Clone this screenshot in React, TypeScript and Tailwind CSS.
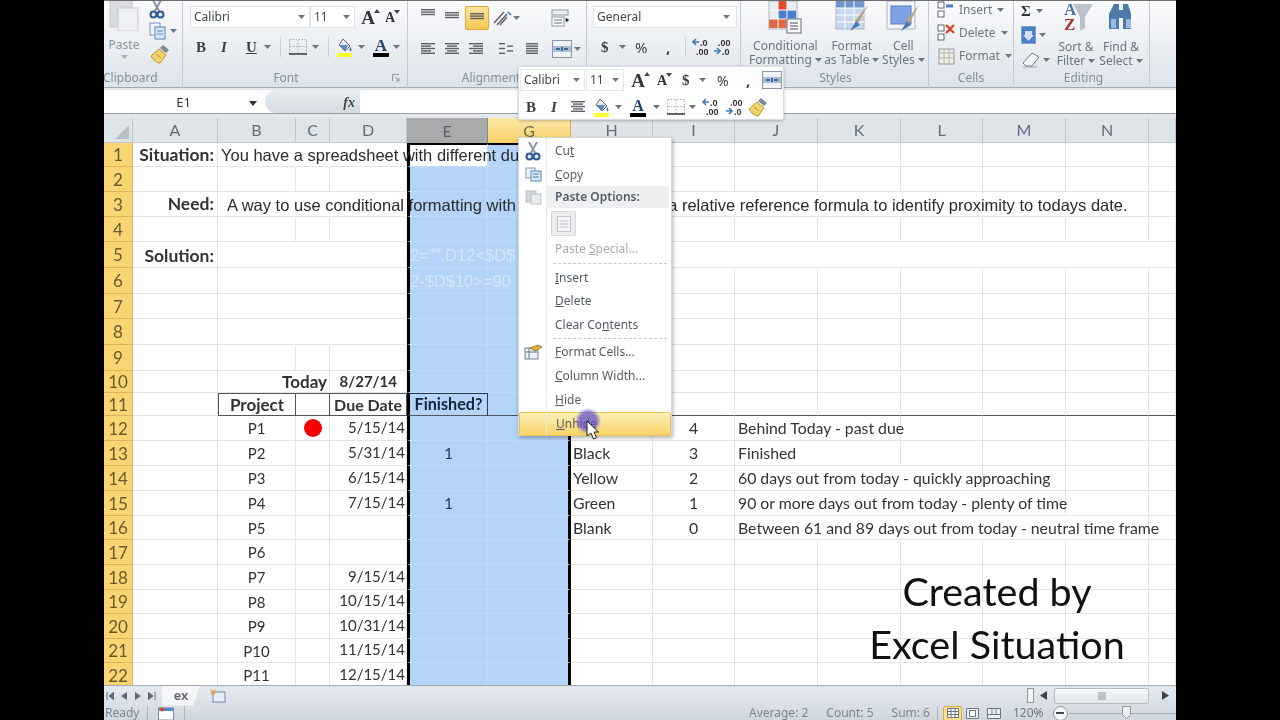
import { ReactNode } from "react";

const COLS = ["A", "B", "C", "D", "E", "G", "H", "I", "J", "K", "L", "M", "N", "O"];
const ROWS = Array.from({ length: 22 }, (_, i) => i + 1);

// cells where the text runs on into the next one, so no gridline on the right
const NO_RIGHT = new Set([
  "B1", "C1", "B3", "C3", "D3", "H3", "I3", "J3", "K3", "L3", "M3",
  "B5", "C5", "H5", "I5", "J5", "K5", "L5", "M5", "N5",
  "B6", "C6", "B7", "C7", "B8", "C8", "B10",
  "J12", "J13", "J14", "J15", "J16", "K14", "K15", "K16", "L15", "L16", "M16",
]);

const calibri = "font-['Lato',sans-serif]";
const arial = "font-['Liberation_Sans',sans-serif] text-[16.5px] text-[#2b2b2b] pt-[2px]";
const faint = "z-10 font-['Liberation_Sans',sans-serif] text-[16.5px] text-[#d5e6fb] pt-[2px]";

const CELLS: Record<string, { text: string; className: string }> = {
  A1: { text: "Situation:", className: "justify-end pr-[3px] pt-[1px] font-bold text-[17.5px]" },
  A3: { text: "Need:", className: "justify-end pr-[3px] font-bold text-[17.5px]" },
  A5: { text: "Solution:", className: "justify-end pr-[3px] pt-[3px] font-bold text-[17.5px]" },
  B1: { text: "You have a spreadsheet with different due dates", className: `z-10 pl-[3px] ${arial}` },
  B3: { text: "A way to use conditional formatting with color sets based on a relative reference formula to identify proximity to todays date.", className: `z-10 pl-[9px] ${arial}` },
  E5: { text: '2="",D12<$D$', className: faint },
  E6: { text: "2-$D$10>=90", className: faint },
  C10: { text: "Today", className: "z-10 justify-end pr-[2px] font-bold text-[17px]" },
  D10: { text: "8/27/14", className: "justify-end pr-[9px] font-bold text-[15px]" },
  B11: { text: "Project", className: "justify-center font-bold text-[17px]" },
  D11: { text: "Due Date", className: "justify-end pr-[4px] font-bold text-[16px]" },
  E11: { text: "Finished?", className: "justify-center font-bold text-[16.2px] text-[#14243a]" },
  E13: { text: "1", className: "justify-center text-[15px] text-[#24384f]" },
  E15: { text: "1", className: "justify-center text-[15px] text-[#24384f]" },
  H13: { text: "Black", className: "pl-[2px] text-[15.8px]" },
  H14: { text: "Yellow", className: "pl-[2px] text-[15.8px]" },
  H15: { text: "Green", className: "pl-[2px] text-[15.8px]" },
  H16: { text: "Blank", className: "pl-[2px] text-[15.8px]" },
  I12: { text: "4", className: "justify-center text-[15.8px]" },
  I13: { text: "3", className: "justify-center text-[15.8px]" },
  I14: { text: "2", className: "justify-center text-[15.8px]" },
  I15: { text: "1", className: "justify-center text-[15.8px]" },
  I16: { text: "0", className: "justify-center text-[15.8px]" },
  J12: { text: "Behind Today - past due", className: "z-10 pl-[3px] text-[15.8px]" },
  J13: { text: "Finished", className: "z-10 pl-[3px] text-[15.8px]" },
  J14: { text: "60 days out from today - quickly approaching", className: "z-10 pl-[3px] text-[15.8px]" },
  J15: { text: "90 or more days out from today - plenty of time", className: "z-10 pl-[3px] text-[15.8px]" },
  J16: { text: "Between 61 and 89 days out from today - neutral time frame", className: "z-10 pl-[3px] text-[15.8px]" },
};

const PROJECTS = ["P1", "P2", "P3", "P4", "P5", "P6", "P7", "P8", "P9", "P10", "P11"];
const DATES = ["5/15/14", "5/31/14", "6/15/14", "7/15/14", "", "", "9/15/14", "10/15/14", "10/31/14", "11/15/14", "12/15/14"];

function Arrow({ className = "" }: { className?: string }) {
  return (
    <svg width="7" height="4" viewBox="0 0 7 4" className={`shrink-0 ${className}`}>
      <path d="M0 0h7L3.5 4z" fill="#6b7683" />
    </svg>
  );
}

function CutIcon() {
  return (
    <svg width="16" height="19" viewBox="0 0 16 19">
      <path d="M4 0l6 11M12 0L6 11" stroke="#8c96a3" strokeWidth="2" />
      <circle cx="4.500" cy="14.500" r="3" fill="#dce6f3" stroke="#33588f" strokeWidth="2" />
      <circle cx="11.500" cy="14.500" r="3" fill="#dce6f3" stroke="#33588f" strokeWidth="2" />
    </svg>
  );
}

function Lines({ rows }: { rows: [number, number][] }) {
  return (
    <svg width="16" height="12" viewBox="0 0 16 12">
      {rows.map(([x, w], i) => (
        <rect key={i} x={x} y={i * 2.4} width={w} height="1.4" fill="#5c6066" />
      ))}
    </svg>
  );
}

function FillIcon() {
  return (
    <svg width="18" height="19" viewBox="0 0 18 19">
      <path d="M7 1l7 7-5 5-6-6z" fill="#e8edf3" stroke="#667" />
      <path d="M3 7h9l-3 6z" fill="#5a8ac6" />
      <path d="M14 9c1.5 2 2 3 1 4s-2-1-1-4z" fill="#3c6ea8" />
      <rect x="1" y="15" width="15" height="4" fill="#ffff30" />
    </svg>
  );
}

function ColorA({ small = false }: { small?: boolean }) {
  return (
    <div className="flex flex-col items-center">
      <span className={`font-['Liberation_Serif',serif] font-bold leading-[15px] text-[#1f3f78] ${small ? "text-[16px]" : "text-[17px]"}`}>A</span>
      <span className="h-[4px] w-[16px] bg-black" />
    </div>
  );
}

function BigA({ up }: { up: boolean }) {
  return (
    <span className="relative font-['Liberation_Serif',serif] font-bold leading-none text-[#333]">
      <span className={up ? "text-[19px]" : "text-[14px]"}>A</span>
      <svg width="6" height="4" viewBox="0 0 6 4" className="absolute -right-[5px] top-[1px]">
        <path d={up ? "M0 4h6L3 0z" : "M0 0h6L3 4z"} fill="#445" />
      </svg>
    </span>
  );
}

function DecIcon({ more }: { more: boolean }) {
  return (
    <svg width="22" height="18" viewBox="0 0 22 18" fontFamily="Liberation Sans, sans-serif" fontSize="9" fontWeight="700" fill="#333">
      {more ? (
        <>
          <text x="5" y="8">.00</text>
          <text x="9" y="17">.0</text>
          <path d="M1 13h5M4 10l3 3-3 3" stroke="#3f78bd" strokeWidth="1.6" fill="none" />
        </>
      ) : (
        <>
          <text x="9" y="8">.0</text>
          <text x="5" y="17">.00</text>
          <path d="M8 4H2M5 1L2 4l3 3" stroke="#3f78bd" strokeWidth="1.6" fill="none" />
        </>
      )}
    </svg>
  );
}

function Painter() {
  return (
    <svg width="22" height="22" viewBox="0 0 22 22">
      <path d="M14 2l6 5-3 3-6-5z" fill="#7c8a98" />
      <path d="M10 6l7 6-6 8c-3 0-7-3-9-7z" fill="#efd56a" stroke="#b3952e" />
      <path d="M7 11l5 4" stroke="#b3952e" />
    </svg>
  );
}

function MergeIcon() {
  return (
    <svg width="20" height="18" viewBox="0 0 20 18">
      <rect x=".5" y=".5" width="19" height="17" fill="#eef2f6" stroke="#8a97a5" />
      <rect x="1" y="6" width="18" height="6" fill="#a9bfd8" />
      <path d="M4 9h4M16 9h-4M10 7v4" stroke="#27486e" strokeWidth="1.4" />
    </svg>
  );
}

function BorderIcon() {
  return (
    <svg width="18" height="16" viewBox="0 0 18 16">
      <rect x=".5" y=".5" width="17" height="14" fill="none" stroke="#a8adb3" strokeDasharray="1.5 1.5" />
      <path d="M9 1v13M1 7.5h16" stroke="#a8adb3" strokeDasharray="1.5 1.5" />
      <path d="M0 15h18" stroke="#444" strokeWidth="1.6" />
    </svg>
  );
}

function RibbonGroup({ className, label, labelClass = "", launcher = false, children }: { className: string; label: string; labelClass?: string; launcher?: boolean; children: ReactNode }) {
  return (
    <div className={`relative flex h-[87px] shrink-0 flex-col overflow-hidden border-r border-[#c5cbd2] ${className}`}>
      <div className="h-[68px]">{children}</div>
      <div className={`flex h-[17px] items-center justify-center text-[12px] text-[#84909c] ${labelClass}`}>{label}</div>
      {launcher && (
        <svg width="8" height="8" viewBox="0 0 8 8" className="absolute bottom-[6px] right-[7px]">
          <path d="M.5 7V.5H7M3 3l4 4M7 4v3H4" stroke="#8b96a3" fill="none" />
        </svg>
      )}
    </div>
  );
}

function Combo({ className, text }: { className: string; text: string }) {
  return (
    <div className={`flex h-[22px] items-center justify-between border border-[#dfe3e8] bg-white px-[3px] text-[12px] text-[#3e4650] ${className}`}>
      <span>{text}</span>
      <Arrow className="mr-[1px]" />
    </div>
  );
}

function Ribbon() {
  return (
    <div className="flex h-[88px] border-t border-b border-t-[#6d6d6d] border-b-[#a5abb2] bg-linear-to-b from-[#fafbfc] to-[#dde3ea] font-['Noto_Sans',sans-serif]">
      <RibbonGroup className="w-[79px]" label="Clipboard" labelClass="justify-start -ml-[1px]">
        <div className="flex">
          <div className="flex w-[40px] flex-col items-center">
            <svg width="30" height="32" viewBox="0 0 30 32" className="-mt-[2px]">
              <rect x="1" y="0" width="22" height="28" rx="1" fill="#d9dcdf" stroke="#c2c5c9" />
              <rect x="9" y="9" width="20" height="23" fill="#eff0f2" stroke="#c9cbcf" />
            </svg>
            <span className="mt-[7px] text-[12px] leading-[14px] text-[#8c96a1]">Paste</span>
            <Arrow className="mt-[3px] opacity-50" />
          </div>
          <div className="flex flex-col items-start gap-[3px] pl-[5px]">
            <div className="-mt-[1px] h-[19px]"><CutIcon /></div>
            <div className="flex items-center gap-[3px]">
              <svg width="18" height="18" viewBox="0 0 18 18">
                <rect x="1" y="1" width="10" height="12" fill="#eef3f8" stroke="#7f98b5" />
                <rect x="6" y="5" width="10" height="12" fill="#d8e6f5" stroke="#5b86b8" />
                <path d="M8 9h6M8 12h6" stroke="#5b86b8" />
              </svg>
              <Arrow />
            </div>
            <Painter />
          </div>
        </div>
      </RibbonGroup>

      <RibbonGroup className="w-[225px]" label="Font" labelClass="pr-[18px]" launcher>
        <div className="pl-[7px] pt-[5px]">
          <div className="flex h-[22px] items-center">
            <Combo className="w-[120px]" text="Calibri" />
            <Combo className="w-[45px]" text="11" />
            <div className="ml-[2px] flex w-[22px] justify-center"><BigA up /></div>
            <div className="flex w-[22px] justify-center"><BigA up={false} /></div>
          </div>
          <div className="mt-[8px] flex h-[22px] items-center font-['Liberation_Serif',serif] text-[15px] text-[#3b3f45]">
            <span className="ml-[6px] w-[25px] font-bold">B</span>
            <span className="w-[25px] font-bold italic">I</span>
            <span className="w-[18px] font-bold underline">U</span>
            <Arrow />
            <span className="ml-[9px] h-[20px] w-px bg-[#ccd1d7]" />
            <span className="ml-[8px]"><BorderIcon /></span>
            <Arrow className="ml-[5px]" />
            <span className="ml-[9px] h-[20px] w-px bg-[#ccd1d7]" />
            <span className="ml-[7px]"><FillIcon /></span>
            <Arrow className="ml-[4px]" />
            <span className="ml-[8px]"><ColorA /></span>
            <Arrow className="ml-[4px]" />
          </div>
        </div>
      </RibbonGroup>

      <RibbonGroup className="w-[179px]" label="Alignment" labelClass="pr-[12px]">
        <div className="pl-[12px] pt-[4px]">
          <div className="flex h-[25px] items-center">
            <div className="flex w-[24px] -translate-y-[3px]"><Lines rows={[[1, 14], [1, 14], [1, 14]]} /></div>
            <div className="flex w-[21px]"><Lines rows={[[1, 14], [1, 14], [1, 14]]} /></div>
            <div className="flex h-[24px] w-[24px] items-center justify-center rounded-[2px] border border-[#dca93b] bg-linear-to-b from-[#fbe29a] to-[#f8c850] pt-[2px]"><Lines rows={[[1, 14], [1, 14], [1, 14]]} /></div>
            <svg width="22" height="18" viewBox="0 0 22 18" className="ml-[2px]">
              <path d="M3 14L13 3M6 16L16 5M9 16l7-8" stroke="#5c6066" strokeWidth="1.4" />
              <path d="M17 3l3 3" stroke="#3f78bd" strokeWidth="1.6" />
            </svg>
            <Arrow />
            <svg width="20" height="18" viewBox="0 0 20 18" className="ml-[31px]">
              <rect x="1" y="1" width="16" height="5" fill="#eee" stroke="#8a97a5" />
              <rect x="1" y="8" width="12" height="9" fill="#fff" stroke="#8a97a5" />
              <path d="M3 11h8M3 14h8M15 9v4l3-2" stroke="#667" />
            </svg>
          </div>
          <div className="mt-[8px] flex h-[22px] items-center">
            <div className="flex w-[24px]"><Lines rows={[[1, 14], [1, 10], [1, 14], [1, 10], [1, 14]]} /></div>
            <div className="flex w-[24px]"><Lines rows={[[1, 14], [3, 10], [1, 14], [3, 10], [1, 14]]} /></div>
            <div className="flex w-[24px]"><Lines rows={[[1, 14], [5, 10], [1, 14], [5, 10], [1, 14]]} /></div>
            <div className="ml-[6px] flex w-[25px]"><Lines rows={[[1, 6], [9, 6], [1, 6], [9, 6], [1, 6]]} /></div>
            <div className="flex w-[24px]"><Lines rows={[[3, 12], [3, 12], [3, 12], [3, 12], [3, 12]]} /></div>
            <div className="ml-[5px] flex items-center gap-[2px]"><MergeIcon /><Arrow /></div>
          </div>
        </div>
      </RibbonGroup>

      <RibbonGroup className="w-[154px]" label="">
        <div className="pl-[6px] pt-[5px]">
          <Combo className="w-[144px] pr-[5px]" text="General" />
          <div className="mt-[8px] flex h-[22px] items-center text-[15px] text-[#3d4147]">
            <span className="ml-[8px] w-[18px] font-['Liberation_Serif',serif] font-bold">$</span>
            <Arrow />
            <span className="ml-[9px] w-[31px]">%</span>
            <span className="w-[19px] font-bold">,</span>
            <span className="h-[20px] w-px bg-[#ccd1d7]" />
            <span className="ml-[5px]"><DecIcon more={false} /></span>
            <span><DecIcon more /></span>
          </div>
        </div>
      </RibbonGroup>

      <RibbonGroup className="w-[188px]" label="Styles" labelClass="pl-[2px]">
        <div className="flex pl-[5px] text-[12px] leading-[14px] text-[#6b7683]">
          <div className="flex w-[80px] flex-col items-center">
            <svg width="34" height="33" viewBox="0 0 34 33" className="mb-[5px]">
              <rect x="1" y="0" width="28" height="28" fill="#e9eef4" stroke="#a9b5c2" />
              <rect x="10" y="0" width="9" height="9" fill="#e0492e" />
              <rect x="10" y="9" width="18" height="9" fill="#4f7fcc" />
              <rect x="1" y="18" width="18" height="9" fill="#e0673f" />
              <path d="M10 0v28M19 0v28M1 9h28M1 18h28" stroke="#fff" />
              <rect x="19" y="18" width="14" height="14" fill="#fff" stroke="#667" />
              <path d="M22 22h8M22 25h8M22 28h8" stroke="#445" />
            </svg>
            <span>Conditional</span>
            <span className="flex items-center gap-[3px]">Formatting <Arrow /></span>
          </div>
          <div className="flex w-[54px] flex-col items-center">
            <svg width="36" height="33" viewBox="0 0 36 33" className="mb-[5px]">
              <rect x="2" y="0" width="28" height="28" fill="#c5d6ed" stroke="#a9b5c2" />
              <rect x="2" y="0" width="28" height="7" fill="#6f95cb" />
              <path d="M11 0v28M20 0v28M2 7h28M2 14h28M2 21h28" stroke="#fff" />
              <path d="M34 4L21 20l3 3z" fill="#b9a27e" />
              <path d="M22 20l-6 10 10-6z" fill="#4f76b0" />
            </svg>
            <span>Format</span>
            <span className="flex items-center gap-[3px] whitespace-nowrap">as Table <Arrow /></span>
          </div>
          <div className="flex w-[50px] flex-col items-center">
            <svg width="36" height="33" viewBox="0 0 36 33" className="mb-[5px]">
              <rect x="2" y="0" width="28" height="28" fill="#f2f5f9" stroke="#a9b5c2" />
              <rect x="6" y="5" width="20" height="18" fill="#7ea3e2" stroke="#5a7fc0" />
              <path d="M34 4L21 20l3 3z" fill="#b9a27e" />
              <path d="M22 20l-6 10 10-6z" fill="#4f76b0" />
            </svg>
            <span>Cell</span>
            <span className="flex items-center gap-[3px] whitespace-nowrap">Styles <Arrow /></span>
          </div>
        </div>
      </RibbonGroup>

      <RibbonGroup className="w-[85px]" label="Cells">
        <div className="-mt-[2px] flex flex-col gap-[2px] pl-[8px] text-[12px] text-[#6b7683]">
          {["Insert", "Delete", "Format"].map((label, i) => (
            <div key={label} className="flex h-[21px] items-center">
              <svg width="20" height="20" viewBox="0 0 20 20" className="mr-[2px]">
                {i === 2 ? (
                  <>
                    <rect x="2" y="3" width="15" height="15" fill="#f4eed9" stroke="#8a97a5" />
                    <path d="M2 7h15M7 3v15M12 3v15M2 12h15" stroke="#a9b5c2" />
                  </>
                ) : (
                  <>
                    <rect x="1" y="2" width="6" height="6" fill="#fff" stroke="#667" />
                    <rect x="1" y="11" width="6" height="6" fill="#fff" stroke="#667" />
                    {i === 0 ? <path d="M9 6h7" stroke="#4f7fcc" strokeWidth="3" /> : <path d="M9 2l8 8M17 2l-8 8" stroke="#d3452d" strokeWidth="2.4" />}
                  </>
                )}
              </svg>
              <span>{label}</span>
              <Arrow className="ml-[5px]" />
            </div>
          ))}
        </div>
      </RibbonGroup>

      <RibbonGroup className="w-[136px]" label="Editing" labelClass="pl-[4px]">
        <div className="flex pl-[7px] text-[12px] leading-[14px] text-[#6b7683]">
          <div className="-mt-[1px] flex w-[32px] flex-col">
            <div className="flex h-[22px] items-center gap-[5px] font-['Liberation_Serif',serif] text-[15px] font-bold text-[#333]">Σ<Arrow /></div>
            <div className="mt-[2px] flex h-[22px] items-center gap-[3px]">
              <svg width="15" height="18" viewBox="0 0 15 18">
                <rect x=".5" y=".5" width="14" height="17" fill="#4a7fcb" stroke="#8a9fbd" />
                <path d="M4 5h7v4h2l-5.500 6L2 9h2z" fill="#cfe0f6" />
              </svg>
              <Arrow />
            </div>
            <div className="mt-[3px] flex h-[22px] items-center gap-[2px]">
              <svg width="20" height="16" viewBox="0 0 20 16">
                <path d="M11 1l7 4-7 9H5L2 11z" fill="#f3f4f6" stroke="#727c88" />
                <path d="M2 15h14" stroke="#a0a8b2" />
              </svg>
              <Arrow />
            </div>
          </div>
          <div className="flex w-[46px] flex-col items-center">
            <div className="relative mb-[4px] h-[35px] w-[34px] translate-x-[2px]">
              <svg width="34" height="32" viewBox="0 0 34 32" className="absolute left-0 top-0">
                <path d="M12 3h20l-8 13v11l-5 3V16z" fill="#bcc2c9" />
              </svg>
              <span className="absolute left-[3px] top-0 font-['Liberation_Serif',serif] text-[17px] font-bold leading-[17px] text-[#4a6fa8]">A</span>
              <span className="absolute left-[3px] top-[15px] font-['Liberation_Serif',serif] text-[17px] font-bold leading-[17px] text-[#a33a2b]">Z</span>
            </div>
            <span className="whitespace-nowrap">Sort &amp;</span>
            <span className="flex items-center gap-[3px]">Filter <Arrow /></span>
          </div>
          <div className="flex w-[44px] flex-col items-center">
            <svg width="30" height="31" viewBox="0 0 30 31" className="mb-[8px]">
              <path d="M8 3h5v6h4V3h5l3 10v15H17V17h-4v11H3V13z" fill="#4d79ad" />
              <rect x="5" y="18" width="5" height="9" fill="#9dbbe0" />
              <rect x="20" y="18" width="5" height="9" fill="#9dbbe0" />
            </svg>
            <span className="whitespace-nowrap">Find &amp;</span>
            <span className="flex items-center gap-[3px]">Select <Arrow /></span>
          </div>
        </div>
      </RibbonGroup>
    </div>
  );
}

function FormulaBar() {
  return (
    <div className="mt-[2px] flex h-[24px] border-b border-[#9aa1a9] bg-white font-['Noto_Sans',sans-serif]">
      <div className="relative flex w-[161px] items-center justify-center pt-[2px] text-[13px] text-[#30363d]">
        <span className="pr-[2px]">E1</span>
        <svg width="8" height="5" viewBox="0 0 8 5" className="absolute right-[8px] top-[11px]">
          <path d="M0 0h8L4 5z" fill="#333" />
        </svg>
      </div>
      <div className="flex w-[95px] items-center justify-end rounded-l-[12px] bg-linear-to-b from-[#e8ecf0] to-[#d5dbe2] pr-[5px] pt-[2px]">
        <span className="font-['Liberation_Serif',serif] text-[14px] font-bold italic text-[#444]">fx</span>
      </div>
    </div>
  );
}

function Cell({ col, row }: { col: string; row: number }) {
  const id = `${col}${row}`;
  const selected = col === "E" || col === "G";
  const cell = CELLS[id];
  let text = cell?.text;
  let extra = cell?.className ?? "";
  if (row >= 12 && col === "B") {
    text = PROJECTS[row - 12];
    extra = "justify-center text-[15px] text-[#333] pt-[1px]";
  }
  if (row >= 12 && col === "D") {
    text = DATES[row - 12];
    extra = "justify-end pr-[1px] pb-[2px] text-[15px] text-[#333]";
  }

  const bg = id === "E1" ? "bg-white" : selected ? "bg-[#b5d4fa]" : "bg-white";
  const lineColor = selected ? "border-[#c0dafb]" : "border-[#e3e5e8]";
  const hideRight = NO_RIGHT.has(id) ? "border-r-transparent" : "";
  const frame: string[] = [];
  if (col === "E") frame.push("border-l-[3px] border-l-black");
  if (col === "G") frame.push("border-r-[3px] border-r-black");
  if (selected && row === 1) frame.push("border-t-2 border-t-black");
  if (col === "E" && row === 11) frame.push("border-t border-t-[#24384f]");
  if (row === 11 && col !== "A") frame.push("border-b-[#50565c]");
  if (row === 11 && (col === "B" || col === "C" || col === "D")) frame.push("border-t border-t-[#50565c] border-r-[#50565c]");
  if (row === 11 && col === "B") frame.push("border-l border-l-[#50565c]");
  if (row === 11 && col === "E") frame.push("border-r-[#24384f]");

  return (
    <div className={`flex min-w-0 items-center whitespace-nowrap border-r border-b ${lineColor} ${bg} ${hideRight} ${frame.join(" ")} ${extra}`}>
      {text}
      {id === "C12" && <span className="mx-auto h-[18px] w-[18px] rounded-full bg-[#f80000]" />}
    </div>
  );
}

function Sheet() {
  return (
    <div className={`relative mt-[4px] grid h-[567px] grid-cols-[29px_85px_78px_34px_77px_81px_83px_82px_82px_83px_83px_82px_83px_83px_27px] grid-rows-[25px_24px_25px_25px_25px_26px_26px_25px_26px_26px_22px_23px_25px_25px_25px_25px_24px_25px_25px_24px_25px_24px_25px] overflow-hidden bg-white text-[#333] ${calibri}`}>
      <div className="flex items-end justify-end border-r border-b border-[#c2c8cf] bg-[#dfe4e9] p-[3px]">
        <svg width="14" height="14" viewBox="0 0 14 14"><path d="M14 0v14H0z" fill="#b9c0c8" /></svg>
      </div>
      {COLS.map((col) =>
        col === "E" ? (
          <div key={col} className="flex items-center justify-center border-r border-[#85878a] bg-[#a9aaab] text-[16px] text-[#5c6066]">E</div>
        ) : col === "G" ? (
          <div key={col} className="flex items-center justify-center border-r border-[#e0b84f] bg-linear-to-b from-[#fbe9a8] to-[#f8cf63] text-[16px] text-[#6f6a50]">G</div>
        ) : (
          <div key={col} className="flex items-center justify-center border-r border-b border-[#c2c8cf] bg-[#dfe4e9] text-[16px] text-[#5f6d7c]">{col === "O" ? "" : col}</div>
        ),
      )}
      {ROWS.map((row) => (
        <div key={row} className="contents">
          <div className="flex items-center justify-center border-r border-b border-[#e0b557] bg-[#f9d574] text-[17px] leading-none text-[#6a5a2c]">{row}</div>
          {COLS.map((col) => (
            <Cell key={col} col={col} row={row} />
          ))}
        </div>
      ))}
      <div className="absolute left-[650px] top-[446px] z-10 flex w-[486px] flex-col items-center text-[39.5px] leading-[53px] text-[#111]">
        <span>Created by</span>
        <span>Excel Situation</span>
      </div>
    </div>
  );
}

function TabBar() {
  return (
    <div className="flex h-[20px] items-center border-t border-[#a4abb3] bg-linear-to-b from-[#e4e9ee] to-[#d9dfe6]">
      <div className="flex w-[58px] items-center justify-between pl-[2px] pr-[6px] text-[#5c6b7a]">
        <svg width="8" height="8" viewBox="0 0 8 8"><path d="M1 0v8M8 0v8L3 4z" stroke="#5c6b7a" fill="#5c6b7a" /></svg>
        <svg width="6" height="8" viewBox="0 0 6 8"><path d="M6 0v8L0 4z" fill="#5c6b7a" /></svg>
        <svg width="6" height="8" viewBox="0 0 6 8"><path d="M0 0v8l6-4z" fill="#5c6b7a" /></svg>
        <svg width="8" height="8" viewBox="0 0 8 8"><path d="M7 0v8M0 0v8l5-4z" stroke="#5c6b7a" fill="#5c6b7a" /></svg>
      </div>
      <div className="flex h-[20px] w-[38px] items-center justify-center bg-[#f4f6f8] font-['Noto_Sans',sans-serif] text-[13px] font-semibold text-[#5c6167] [clip-path:polygon(0_0,100%_0,82%_100%,0_100%)]">ex</div>
      <div className="ml-[2px] flex h-[20px] w-[31px] items-center justify-center">
        <svg width="16" height="14" viewBox="0 0 16 14">
          <rect x="3" y="3" width="12" height="10" fill="#e7eef6" stroke="#6d88a8" />
          <path d="M1 1l4 4M5 1L1 5" stroke="#e3a12c" strokeWidth="1.4" />
        </svg>
      </div>
      <div className="ml-auto flex h-[20px] items-center">
        <div className="h-[15px] w-[7px] border border-[#8d959e] bg-[#f3f5f7]" />
        <svg width="7" height="9" viewBox="0 0 7 9" className="ml-[6px]"><path d="M7 0v9L0 4.500z" fill="#3e4650" /></svg>
        <div className="ml-[7px] flex h-[16px] w-[95px] items-center justify-center rounded-[2px] border border-[#b6bcc4] bg-linear-to-b from-[#f5f6f8] to-[#e3e6ea]">
          <svg width="8" height="8" viewBox="0 0 8 8"><path d="M1 0v8M3 0v8M5 0v8M7 0v8" stroke="#8d959e" /></svg>
        </div>
        <svg width="7" height="9" viewBox="0 0 7 9" className="ml-[13px] mr-[7px]"><path d="M0 0v9l7-4.500z" fill="#3e4650" /></svg>
      </div>
    </div>
  );
}

function StatusBar() {
  return (
    <div className="flex h-[15px] items-center overflow-hidden bg-linear-to-b from-[#dbe0e6] to-[#cfd6dd] pl-[1px] pt-[1px] font-['Noto_Sans',sans-serif] text-[12px] text-[#7a8794]">
      <span className="w-[42px]">Ready</span>
      <span className="h-[15px] w-px bg-[#aeb5bd]" />
      <svg width="16" height="13" viewBox="0 0 16 13" className="ml-[10px]">
        <rect x=".5" y="1" width="15" height="12" fill="#fff" stroke="#7a8fa8" />
        <rect x="1" y="1" width="14" height="3" fill="#5b8ac4" />
        <circle cx="4" cy="2.500" r="2" fill="#d8452d" />
      </svg>
      <span className="ml-[10px] h-[15px] w-px bg-[#aeb5bd]" />
      <span className="ml-[564px]">Average: 2</span>
      <span className="ml-[18px]">Count: 5</span>
      <span className="ml-[18px]">Sum: 6</span>
      <span className="ml-[7px] h-[15px] w-px bg-[#aeb5bd]" />
      <span className="ml-[5px] flex h-[15px] w-[19px] items-center justify-center rounded-[2px] border border-[#dca93b] bg-[#fbdf8c]">
        <svg width="12" height="10" viewBox="0 0 12 10"><path d="M.5.5h11v9H.5zM4 .5v9M8 .5v9M.5 3.500h11M.5 6.500h11" stroke="#6a7484" fill="#fff" /></svg>
      </span>
      <svg width="13" height="11" viewBox="0 0 13 11" className="ml-[4px]"><path d="M.5.5h12v10H.5z" stroke="#6a7484" fill="#eef1f4" /><path d="M3.500 2.500h6v6h-6z" stroke="#6a7484" fill="#fff" /></svg>
      <svg width="14" height="11" viewBox="0 0 14 11" className="ml-[8px]"><path d="M.5.5h13v10H.5zM5 .5v6M9 .5v6M.5 6.500h13" stroke="#6a7484" fill="#eef1f4" /></svg>
      <span className="ml-[12px] text-[#6d7986]">120%</span>
      <span className="ml-[9px] flex h-[15px] w-[15px] items-center justify-center rounded-full border border-[#8d959e] bg-[#f3f5f7]">
        <span className="h-[2px] w-[8px] bg-[#3e4650]" />
      </span>
      <div className="relative ml-[1px] h-px flex-1 bg-[#a8afb7]">
        <svg width="9" height="13" viewBox="0 0 9 13" className="absolute left-[53px] -top-[7px]"><path d="M.5.5h8v8L4.500 12.500.5 8.500z" fill="#eef1f4" stroke="#8d959e" /></svg>
      </div>
    </div>
  );
}

function MiniToolbar() {
  return (
    <div className="absolute left-[518px] top-[66px] z-20 h-[54px] w-[266px] rounded-[2px] border border-[#d8dce1] bg-white/95 font-['Noto_Sans',sans-serif] shadow-[0_1px_3px_rgba(0,0,0,0.25)]">
      <div className="flex h-[26px] items-center pl-[1px]">
        <Combo className="w-[65px] border-[#e6e9ec]" text="Calibri" />
        <Combo className="ml-px w-[38px] border-[#e6e9ec]" text="11" />
        <div className="ml-[3px] flex w-[22px] justify-center"><BigA up /></div>
        <div className="ml-[2px] flex w-[22px] justify-center"><BigA up={false} /></div>
        <span className="ml-[9px] w-[17px] font-['Liberation_Serif',serif] text-[15px] font-bold text-[#3b3f45]">$</span>
        <Arrow />
        <span className="ml-[11px] w-[29px] text-[14px] text-[#3d4147]">%</span>
        <span className="w-[14px] text-[15px] font-bold text-[#3d4147]">,</span>
        <span className="ml-[2px]"><MergeIcon /></span>
      </div>
      <div className="mt-[1px] flex h-[26px] items-center font-['Liberation_Serif',serif] text-[15px] text-[#3b3f45]">
        <span className="ml-[7px] w-[25px] font-bold">B</span>
        <span className="w-[19px] font-bold italic">I</span>
        <Lines rows={[[1, 14], [3, 10], [1, 14], [3, 10], [1, 14]]} />
        <span className="ml-[7px]"><FillIcon /></span>
        <Arrow className="ml-[4px]" />
        <span className="ml-[8px]"><ColorA small /></span>
        <Arrow className="ml-[7px]" />
        <span className="ml-[7px]"><BorderIcon /></span>
        <Arrow className="ml-[4px]" />
        <span className="ml-[5px]"><DecIcon more={false} /></span>
        <span className="ml-[2px]"><DecIcon more /></span>
        <Painter />
      </div>
    </div>
  );
}

function MenuItem({ className = "h-[24px]", icon, children, active = false, muted = false }: { className?: string; icon?: ReactNode; children: ReactNode; active?: boolean; muted?: boolean }) {
  return (
    <div className={`flex items-center ${className} ${active ? "rounded-[2px] border border-[#e6c65c] bg-linear-to-b from-[#fdf0b5] to-[#f8d365]" : ""}`}>
      <div className="flex h-full w-[28px] shrink-0 items-center justify-center">{icon}</div>
      <span className={`pl-[8px] ${muted ? "text-[#a8acb1]" : "text-[#545c66]"}`}>{children}</span>
    </div>
  );
}

function ContextMenu() {
  return (
    <div className="absolute left-[518px] top-[137px] z-20 h-[299px] w-[154px] border border-[#d3d7dc] bg-white pt-[1px] font-['Noto_Sans',sans-serif] text-[12px] shadow-[1px_2px_4px_rgba(0,0,0,0.3)]">
      <div className="absolute bottom-0 left-[27px] top-0 w-px bg-[#e8eaec]" />
      <MenuItem icon={<CutIcon />}>Cu<u>t</u></MenuItem>
      <MenuItem className="h-[23px]" icon={
        <svg width="17" height="15" viewBox="0 0 17 15">
          <rect x="1" y="1" width="9" height="10" fill="#eef3f8" stroke="#7f98b5" />
          <rect x="6" y="4" width="10" height="10" fill="#d8e6f5" stroke="#5b86b8" />
          <path d="M8 7h6M8 10h6" stroke="#5b86b8" />
        </svg>
      }><u>C</u>opy</MenuItem>
      <div className="relative flex h-[22px] items-center pl-[36px] font-semibold text-[#545c66]">
        <div className="absolute inset-y-0 left-[28px] right-[2px] bg-[#eeeff1]" />
        <svg width="17" height="15" viewBox="0 0 17 15" className="absolute left-[6px] top-[4px]">
          <rect x="1" y="1" width="10" height="11" fill="#d4d7da" stroke="#bcc0c5" />
          <rect x="6" y="4" width="10" height="10" fill="#e9ebed" stroke="#bcc0c5" />
        </svg>
        <span className="relative">Paste Options:</span>
      </div>
      <div className="flex h-[30px] items-center pl-[32px]">
        <div className="flex h-[25px] w-[25px] items-center justify-center rounded-[1px] border border-[#d8dadd] bg-[#eceef0]">
          <svg width="14" height="17" viewBox="0 0 14 17"><rect x=".5" y="1.500" width="13" height="15" fill="#f5f6f7" stroke="#c6c9cd" /><path d="M3 6h8M3 9h8M3 12h8" stroke="#c6c9cd" /></svg>
        </div>
      </div>
      <MenuItem className="h-[22px]" muted>Paste <u>S</u>pecial...</MenuItem>
      <div className="ml-[34px] mr-[4px] mt-[3px] h-[3px] border-t border-dashed border-[#c6c9cd]" />
      <MenuItem className="h-[23px]"><u>I</u>nsert</MenuItem>
      <MenuItem><u>D</u>elete</MenuItem>
      <MenuItem className="h-[23px]">Clear Co<u>n</u>tents</MenuItem>
      <div className="ml-[34px] mr-[4px] mt-[2px] h-[2px] border-t border-dashed border-[#c6c9cd]" />
      <MenuItem icon={
        <svg width="18" height="16" viewBox="0 0 18 16">
          <rect x="1" y="4" width="13" height="11" fill="#eaeff5" stroke="#6f8199" />
          <path d="M1 8h13M5 4v11" stroke="#6f8199" />
          <path d="M6 4l8-3 4 2-7 4z" fill="#d9b23c" stroke="#a3852a" />
        </svg>
      }><u>F</u>ormat Cells...</MenuItem>
      <MenuItem><u>C</u>olumn Width...</MenuItem>
      <MenuItem><u>H</u>ide</MenuItem>
      <MenuItem active><u>U</u>nhide</MenuItem>
    </div>
  );
}

function Cursor() {
  return (
    <>
      <div className="absolute left-[577px] top-[410px] z-30 h-[22px] w-[22px] rounded-full bg-[#5a48d0]/70 blur-[1.5px]" />
      <svg width="13" height="20" viewBox="0 0 13 20" className="absolute left-[586px] top-[420px] z-30">
        <path d="M1 1v15l4-3 2.500 6 3-1.300L8 12h4.500z" fill="#fff" stroke="#222" strokeWidth="1" />
      </svg>
    </>
  );
}

export default function App() {
  return (
    <div className="relative h-[720px] w-[1280px] overflow-hidden bg-black px-[104px] blur-[0.35px]">
      <div className="flex h-[720px] flex-col bg-[#e4e8ed]">
        <Ribbon />
        <FormulaBar />
        <Sheet />
        <TabBar />
        <StatusBar />
      </div>
      <MiniToolbar />
      <ContextMenu />
      <Cursor />
    </div>
  );
}
